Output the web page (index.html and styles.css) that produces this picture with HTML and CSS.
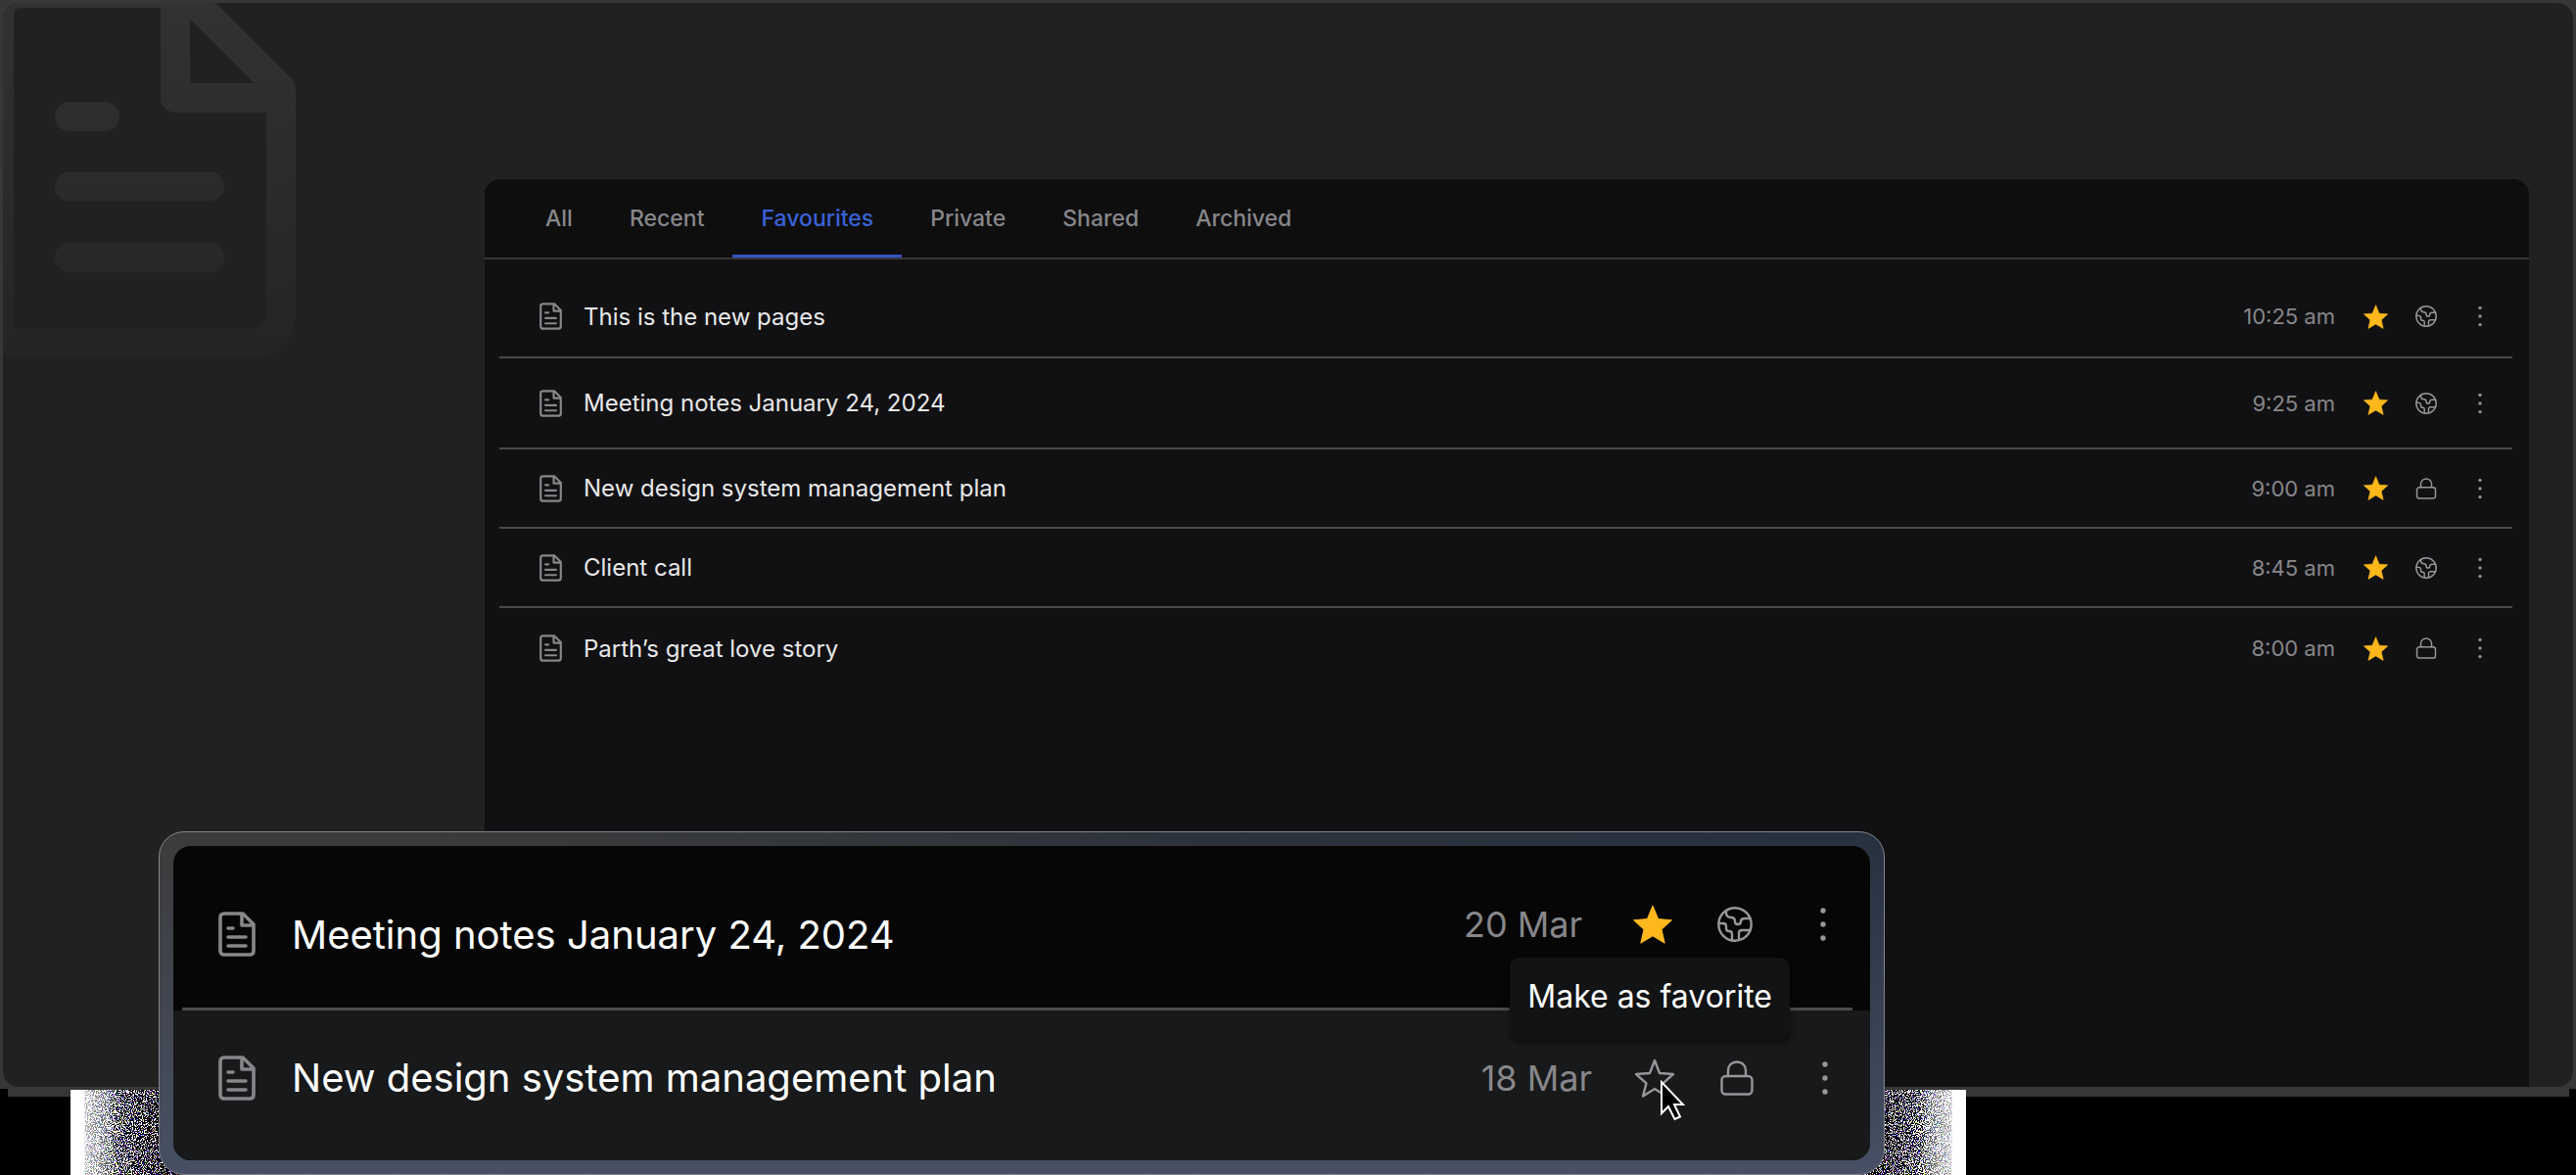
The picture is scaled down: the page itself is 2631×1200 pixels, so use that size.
FILE: index.html
```
<!DOCTYPE html>
<html lang="en">
<head>
<meta charset="utf-8">
<meta name="viewport" content="width=device-width, initial-scale=1">
<title>Pages – Favourites</title>
<link rel="stylesheet" href="styles.css">
</head>
<body>
<svg class="defs" aria-hidden="true">
  <defs>
    <symbol id="doc" viewBox="0 0 38 46">
      <path d="M6 2H25L36 13V40Q36 44 32 44H6Q2 44 2 40V6Q2 2 6 2ZM24 2V14H36M10 17H15M10 26H28M10 35H28" fill="none" stroke="currentColor" stroke-width="3.6" stroke-linejoin="round" stroke-linecap="round"/>
    </symbol>
    <symbol id="star" viewBox="0 0 40 40">
      <path d="M20 1L25.6 14.6L39.5 15.7L29 25.2L32.2 39.2L20 31.8L7.8 39.2L11 25.2L.5 15.7L14.4 14.6Z" fill="currentColor" stroke="currentColor" stroke-linejoin="round"/>
    </symbol>
    <symbol id="star-line" viewBox="0 0 40 40">
      <path d="M20 2L25 15L39 16L28.500 25.4L32 38.500L20 31L8 38.500L11.500 25.4L1 16L15 15Z" fill="none" stroke="currentColor" stroke-width="2.4" stroke-linejoin="round"/>
    </symbol>
    <symbol id="globe" viewBox="0 0 36 36">
      <g fill="none" stroke="currentColor" stroke-width="2.4" stroke-linejoin="round" stroke-linecap="round">
        <circle cx="18" cy="18" r="16.7"/>
        <path d="M9 4V6Q9 11 14 11Q18 11 18 15Q18 18 21 18Q24 18 24 15Q24 12 28 12H33.500"/>
        <path d="M1.500 17H6Q9 17 9 20V22Q9 25 12 25Q15 25 15 28V34.500"/>
        <path d="M22 34V27Q22 24 25 24H33.500"/>
      </g>
    </symbol>
    <symbol id="lock" viewBox="0 0 36 36">
      <g fill="none" stroke="currentColor" stroke-width="2.4" stroke-linecap="round">
        <rect x="2.500" y="16" width="31" height="18.500" rx="4"/>
        <path d="M9 16V10A9 8.500 0 0 1 27 10V16"/>
      </g>
    </symbol>
    <symbol id="dots" viewBox="0 0 8 36">
      <g fill="currentColor"><circle cx="4" cy="4" r="2.700"/><circle cx="4" cy="18" r="2.700"/><circle cx="4" cy="32" r="2.700"/></g>
    </symbol>
  </defs>
</svg>

<main class="stage">
  <div class="shell">
  <section class="frame">
    <svg class="watermark" viewBox="0 0 304 370" aria-hidden="true">
      <defs>
        <linearGradient id="fade" gradientUnits="userSpaceOnUse" x1="0" y1="0" x2="0" y2="370">
          <stop offset="0" stop-color="#323232"/><stop offset="1" stop-color="#242424"/>
        </linearGradient>
      </defs>
      <path d="M24 -7H189L287 91V317Q287 351 253 351H24Q-1 351 -1 326V18Q-1 -7 24 -7ZM179 -7V100H287M71 119H107M71 190.500H214M71 263H214" fill="none" stroke="url(#fade)" stroke-width="30" stroke-linejoin="round" stroke-linecap="round"/>
    </svg>

    <div class="panel">
      <nav class="tabs" aria-label="Page filters">
        <a class="tab" href="#all">All</a>
        <a class="tab" href="#recent">Recent</a>
        <a class="tab tab--active" href="#favourites" aria-current="page">Favourites</a>
        <a class="tab" href="#private">Private</a>
        <a class="tab" href="#shared">Shared</a>
        <a class="tab" href="#archived">Archived</a>
      </nav>
      <ul class="rows">
        <li class="row row--first">
          <svg class="doc"><use href="#doc"/></svg><span class="title">This is the new pages</span>
          <time class="time">10:25 am</time>
          <button class="act act--star" aria-label="Remove from favourites"><svg><use href="#star"/></svg></button>
          <button class="act" aria-label="Public"><svg><use href="#globe"/></svg></button>
          <button class="act act--more" aria-label="More"><svg><use href="#dots"/></svg></button>
        </li>
        <li class="row row--tall">
          <svg class="doc"><use href="#doc"/></svg><span class="title">Meeting notes January 24, 2024</span>
          <time class="time">9:25 am</time>
          <button class="act act--star" aria-label="Remove from favourites"><svg><use href="#star"/></svg></button>
          <button class="act" aria-label="Public"><svg><use href="#globe"/></svg></button>
          <button class="act act--more" aria-label="More"><svg><use href="#dots"/></svg></button>
        </li>
        <li class="row">
          <svg class="doc"><use href="#doc"/></svg><span class="title">New design system management plan</span>
          <time class="time">9:00 am</time>
          <button class="act act--star" aria-label="Remove from favourites"><svg><use href="#star"/></svg></button>
          <button class="act" aria-label="Private"><svg><use href="#lock"/></svg></button>
          <button class="act act--more" aria-label="More"><svg><use href="#dots"/></svg></button>
        </li>
        <li class="row">
          <svg class="doc"><use href="#doc"/></svg><span class="title">Client call</span>
          <time class="time">8:45 am</time>
          <button class="act act--star" aria-label="Remove from favourites"><svg><use href="#star"/></svg></button>
          <button class="act" aria-label="Public"><svg><use href="#globe"/></svg></button>
          <button class="act act--more" aria-label="More"><svg><use href="#dots"/></svg></button>
        </li>
        <li class="row row--last">
          <svg class="doc"><use href="#doc"/></svg><span class="title">Parth’s great love story</span>
          <time class="time">8:00 am</time>
          <button class="act act--star" aria-label="Remove from favourites"><svg><use href="#star"/></svg></button>
          <button class="act" aria-label="Private"><svg><use href="#lock"/></svg></button>
          <button class="act act--more" aria-label="More"><svg><use href="#dots"/></svg></button>
        </li>
      </ul>
    </div>
  </section>
  </div>

  <div class="grain" aria-hidden="true">
    <svg class="grain-side">
      <filter id="noise" x="0" y="0" width="100%" height="100%" color-interpolation-filters="sRGB">
        <feTurbulence type="fractalNoise" baseFrequency="0.9" numOctaves="2" seed="4" result="n"/>
        <feColorMatrix in="n" type="matrix" values="4.500 .3 0 0 -2.300  4 .8 0 0 -2.300  4 0 .9 0 -2.300  0 0 0 0 1" result="m"/>
        <feComposite in="SourceGraphic" in2="m" operator="arithmetic" k2="1.300" k3="1.400" k4="-.4" result="s"/>
        <feComponentTransfer in="s"><feFuncR type="linear" slope="3" intercept="-.8"/><feFuncG type="linear" slope="3" intercept="-.8"/><feFuncB type="linear" slope="3" intercept="-.8"/><feFuncA type="linear" slope="0" intercept="1"/></feComponentTransfer>
      </filter>
      <linearGradient id="ramp"><stop offset="0" stop-color="#fff"/><stop offset=".08" stop-color="#fff"/><stop offset=".14" stop-color="#b0b0b0"/><stop offset=".35" stop-color="#989898"/><stop offset=".55" stop-color="#606060"/><stop offset="1" stop-color="#181818"/></linearGradient>
      <rect width="100%" height="100%" fill="url(#ramp)" filter="url(#noise)"/>
    </svg>
    <svg class="grain-side grain-side--right"><rect width="100%" height="100%" fill="url(#ramp)" filter="url(#noise)"/></svg>
  </div>

  <section class="peek">
    <div class="peek-inner">
      <div class="peek-row peek-row--top">
        <svg class="doc"><use href="#doc"/></svg><span class="title">Meeting notes January 24, 2024</span>
        <div class="meta">
          <time class="time">20 Mar</time>
          <button class="act act--star" aria-label="Remove from favourites"><svg><use href="#star"/></svg></button>
          <button class="act" aria-label="Public"><svg><use href="#globe"/></svg></button>
          <button class="act act--more" aria-label="More"><svg><use href="#dots"/></svg></button>
        </div>
      </div>
      <div class="peek-row peek-row--hover">
        <svg class="doc"><use href="#doc"/></svg><span class="title">New design system management plan</span>
        <div class="meta">
          <time class="time">18 Mar</time>
          <button class="act act--unstarred" aria-label="Make as favorite"><svg><use href="#star-line"/></svg></button>
          <button class="act" aria-label="Private"><svg><use href="#lock"/></svg></button>
          <button class="act act--more" aria-label="More"><svg><use href="#dots"/></svg></button>
        </div>
      </div>
      <div class="tooltip" role="tooltip">Make as favorite</div>
      <svg class="cursor" viewBox="0 0 26 42" aria-hidden="true"><path d="M2 2V34L9 27L15.500 40L21 37.500L15 25H24Z" fill="#000" stroke="#fff" stroke-width="2"/></svg>
    </div>
  </section>
</main>
</body>
</html>
```
FILE: styles.css
```
* { box-sizing: border-box; }

body {
  margin: 0;
  background: #000;
  color: #e8e8e9;
  font-family: Inter, "Liberation Sans", sans-serif;
  font-size: 24px;
}

.defs { position: absolute; width: 0; height: 0; }

.stage {
  position: relative;
  min-height: 100vh;
  padding-bottom: 80px;
  overflow: hidden;
}

.shell {
  display: flex;
  min-height: calc(100vh - 80px);
  padding: 3px 3px 10px;
  background: #373737;
  clip-path: polygon(0 0, 100% 0, 100% calc(100% - 8px), calc(100% - 7px) calc(100% - 8px), calc(100% - 7px) 100%, 8px 100%, 8px calc(100% - 8px), 0 calc(100% - 8px));
}

.frame {
  position: relative;
  flex: 1;
  display: flex;
  padding: 180px 45px 0 492px;
  border-radius: 16px;
  background: #212121;
  overflow: hidden;
}

.watermark { position: absolute; left: -3px; top: -3px; width: 304px; height: 370px; }

.panel {
  position: relative;
  flex: 1;
  border-radius: 16px 16px 0 0;
  background: #111113;
  overflow: hidden;
}

.tabs {
  display: flex;
  height: 82px;
  padding: 0 33px;
  background: #0e0e0f;
  border-bottom: 2px solid #37373a;
}

.tab {
  display: flex;
  align-items: center;
  padding: 2px 29px 0;
  border-bottom: 3px solid transparent;
  color: #87878a;
  font-size: 23px;
  font-weight: 500;
  text-decoration: none;
}

.tab--active { color: #3a62d8; border-color: #3752c0; }

.rows { list-style: none; margin: 0; padding: 17px 17px 0 15px; }

.row {
  display: flex;
  align-items: center;
  height: 81px;
  padding: 0 30px 0 41px;
}
.row + .row { border-top: 2px solid #4a4a4c; }
.row--first { height: 82px; }
.row--tall { height: 93px; }
.row--last { height: 84px; }

.title { margin-left: 22px; flex: 1; white-space: nowrap; }
.time { color: #87878a; font-size: 22px; white-space: nowrap; }

.doc { width: 23px; height: 28px; color: #87878a; flex: none; }

.act {
  display: flex;
  padding: 0;
  border: 0;
  background: none;
  color: #97979a;
  margin-left: 28px;
}
.act svg { width: 22px; height: 22px; }
.act--star, .act--unstarred { margin-left: 29px; }
.act--star svg { width: 25px; height: 25px; }
.act--star { color: #ffb81c; }
.act--more { margin-left: 41px; }
.act--more svg { width: 6px; height: 22px; }

.grain {
  position: absolute;
  left: 72px;
  right: 623px;
  bottom: 0;
  height: 87px;
  display: flex;
  justify-content: space-between;
}
.grain-side { width: 110px; height: 87px; }
.grain-side--right { transform: scaleX(-1); }

.peek {
  position: absolute;
  left: 162px;
  right: 706px;
  bottom: 0;
  padding: 14px;
  border: 1px solid #82868d;
  border-radius: 26px;
  background: linear-gradient(to bottom, #47506400, #475064), linear-gradient(to right, #3b3b3b, #3a3a3a 20%, #2c323b 60%, #27303f);
}

.peek-inner { position: relative; border-radius: 18px; background: #060606; }

.peek-row {
  position: relative;
  display: flex;
  align-items: center;
  height: 153px;
  padding: 0 44px 0 46px;
  font-size: 40px;
  color: #fff;
}
.peek-row--top { height: 168px; padding-top: 12px; }
.peek-row--top::after {
  content: "";
  position: absolute;
  left: 9px;
  right: 18px;
  bottom: 0;
  height: 3px;
  background: #4a4b4c;
}
.peek-row--hover { padding-bottom: 16px; padding-right: 42px; background: #17191a; border-radius: 0 0 18px 18px; }

.peek-row .title { margin-left: 37px; }
.peek-row .doc { width: 38px; height: 46px; }
.peek-row .time { font-size: 36px; }
.meta { display: flex; align-items: center; }
.peek-row--top .meta { margin-bottom: 20px; }
.peek-row .act { margin-left: 46px; }
.peek-row .act svg { width: 36px; height: 36px; }
.peek-row .act--star { margin-left: 52px; }
.peek-row .act--unstarred { margin-left: 44px; }
.peek-row .act--star svg, .peek-row .act--unstarred svg { width: 40px; height: 40px; }
.peek-row .act--more { margin-left: 68px; }
.peek-row .act--more svg { width: 8px; height: 36px; }

.tooltip {
  position: absolute;
  top: 114px;
  right: 82px;
  padding: 20px 18px 24px;
  border-radius: 10px;
  background: #111314;
  box-shadow: 0 3px 6px rgba(0, 0, 0, .5);
  color: #fff;
  font-size: 32px;
  line-height: 40px;
  white-space: nowrap;
}

.cursor { position: absolute; top: 239px; right: 189px; width: 26px; height: 42px; }
```
